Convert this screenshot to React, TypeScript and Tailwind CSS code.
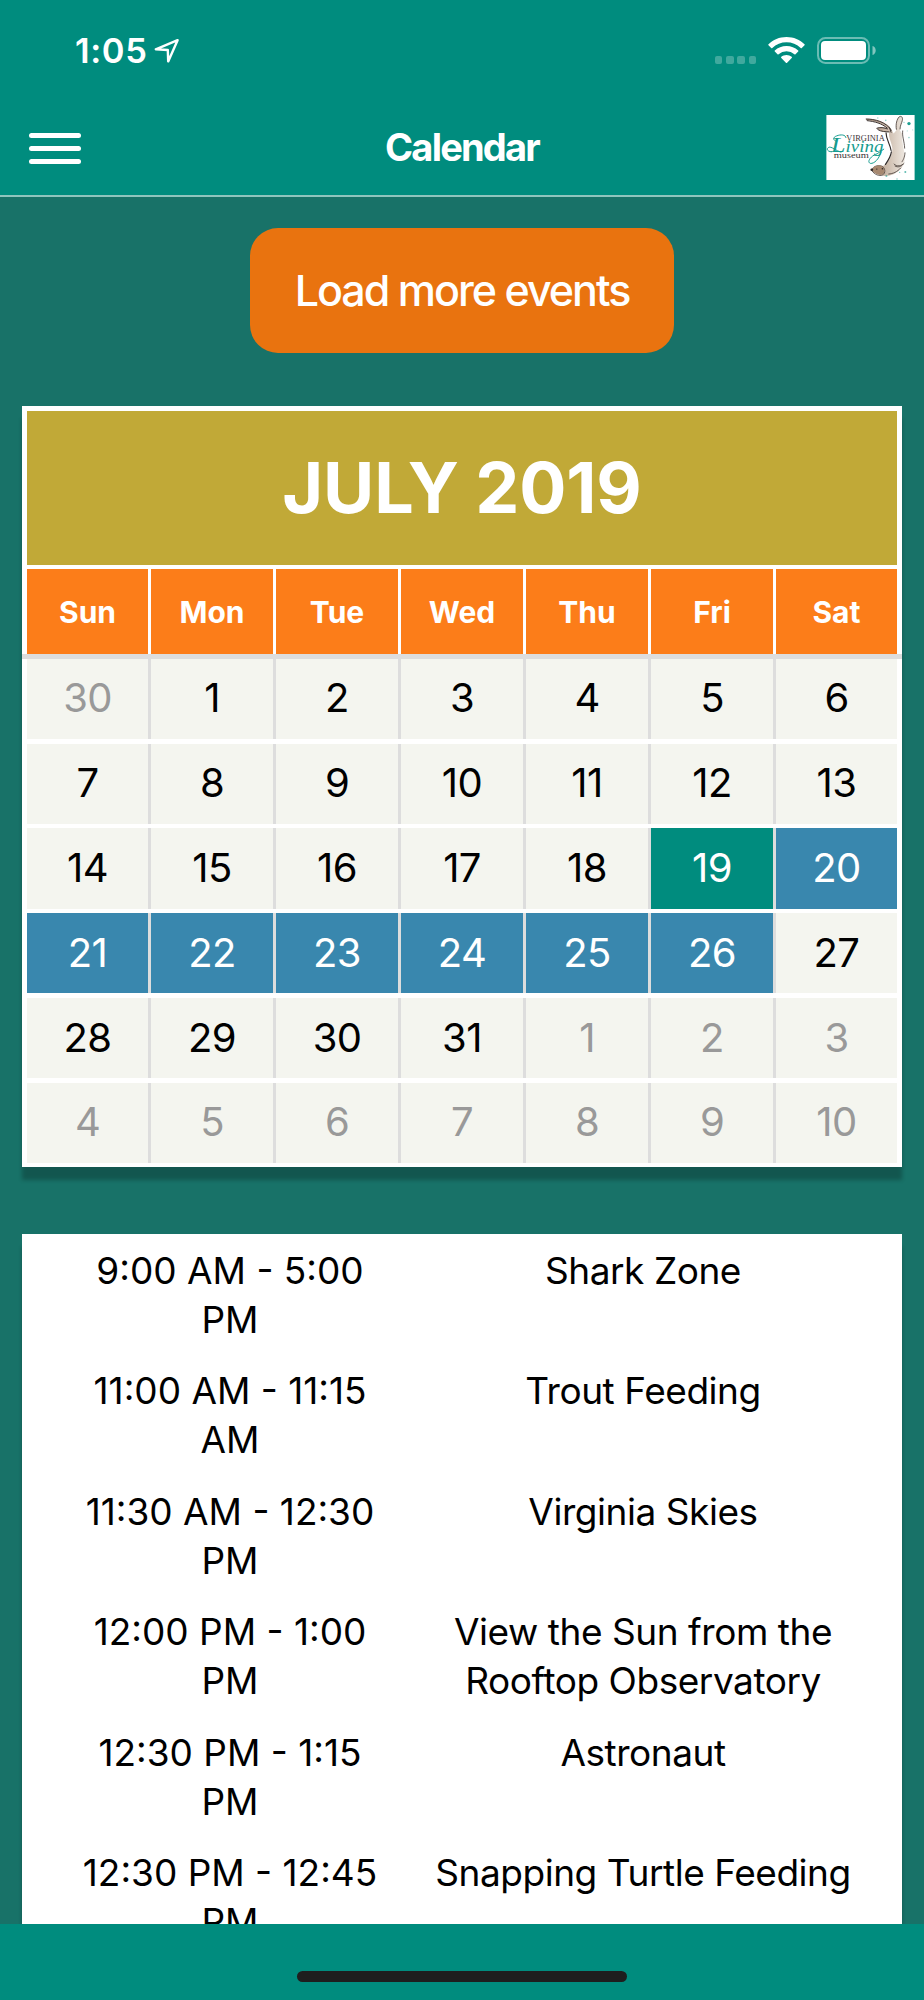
import React from 'react';
import clsx from 'clsx';

type DayState = 'default' | 'outside' | 'today' | 'event';

interface Day {
  label: number;
  state: DayState;
}

interface MuseumEvent {
  time: string;
  title: string;
}

const WEEKDAYS = ['Sun', 'Mon', 'Tue', 'Wed', 'Thu', 'Fri', 'Sat'];

const buildWeeks = (): Day[][] => {
  const days: Day[] = [{ label: 30, state: 'outside' }];
  for (let d = 1; d <= 31; d++) {
    days.push({ label: d, state: d === 19 ? 'today' : d >= 20 && d <= 26 ? 'event' : 'default' });
  }
  for (let d = 1; d <= 10; d++) {
    days.push({ label: d, state: 'outside' });
  }
  return Array.from({ length: 6 }, (_, i) => days.slice(i * 7, i * 7 + 7));
};

const EVENTS: MuseumEvent[] = [
  { time: '9:00 AM - 5:00 PM', title: 'Shark Zone' },
  { time: '11:00 AM - 11:15 AM', title: 'Trout Feeding' },
  { time: '11:30 AM - 12:30 PM', title: 'Virginia Skies' },
  { time: '12:00 PM - 1:00 PM', title: 'View the Sun from the Rooftop Observatory' },
  { time: '12:30 PM - 1:15 PM', title: 'Astronaut' },
  { time: '12:30 PM - 12:45 PM', title: 'Snapping Turtle Feeding' },
];

const StatusBar: React.FC = () => (
  <div className="flex h-[100px] items-start justify-between pt-[36px] pr-[47px] pl-[75px] text-white">
    <div className="flex items-start">
      <span className="text-[34.5px] leading-[29px] font-semibold tracking-[0.6px]">1:05</span>
      <svg className="mt-[2px] ml-[7px]" width="26" height="26" viewBox="0 0 26 26" fill="none">
        <path
          d="M23.6 2.2 1.8 11.3l12 .7.4 11.4Z"
          stroke="currentColor"
          strokeWidth="2.4"
          strokeLinejoin="round"
        />
      </svg>
    </div>
    <div className="flex items-start">
      <div className="mt-[20px] mr-[12px] flex gap-[3.7px]">
        {[0, 1, 2, 3].map((i) => (
          <span key={i} className="h-[7.5px] w-[7.5px] rounded-[2px] bg-white/25" />
        ))}
      </div>
      <svg className="mr-[12px]" width="37" height="28" viewBox="0 0 37 28" fill="currentColor">
        <path d="M18.5 1C11.4 1 5 3.8.5 8.2a.8.8 0 0 0 0 1.100l2.700 2.700c.3.3.8.3 1.100 0a20.500 20.500 0 0 1 28.400 0c.3.3.8.3 1.100 0l2.700-2.700a.8.8 0 0 0 0-1.100C32 3.800 25.600 1 18.500 1Z" />
        <path d="M18.500 10c-4.500 0-8.600 1.700-11.700 4.500a.8.8 0 0 0 0 1.100l2.700 2.700c.3.3.8.3 1.100 0a11.700 11.700 0 0 1 15.800 0c.3.3.8.3 1.100 0l2.700-2.700a.8.8 0 0 0 0-1.100A17.300 17.300 0 0 0 18.500 10Z" />
        <path d="M18.500 19c-2 0-3.800.7-5.200 1.800a.8.8 0 0 0 0 1.200l4.600 4.700c.3.3.9.3 1.200 0l4.600-4.700a.8.8 0 0 0 0-1.200A8.300 8.300 0 0 0 18.500 19Z" />
      </svg>
      <svg width="60" height="28" viewBox="0 0 60 28">
        <rect x="1" y="2" width="51" height="25" rx="7.5" fill="none" stroke="white" strokeOpacity=".42" strokeWidth="2" />
        <rect x="4" y="5" width="45" height="19" rx="4" fill="white" />
        <path d="M55.5 10c2 .5 3.2 2.300 3.200 4.400s-1.200 4-3.200 4.500Z" fill="white" fillOpacity=".5" />
      </svg>
    </div>
  </div>
);

const MuseumLogo: React.FC = () => (
  <svg width="89" height="65" viewBox="0 0 266 196" aria-label="Virginia Living Museum">
    <defs>
      <linearGradient id="fur" x1="0" x2="1">
        <stop offset="0" stopColor="#9d8572" />
        <stop offset=".55" stopColor="#cdbcad" />
        <stop offset="1" stopColor="#eee8e1" />
      </linearGradient>
    </defs>
    <rect width="266" height="196" fill="white" />
    <path
      d="M120 12c24 0 53 7 70 22l13 22 8-10c-3-12 0-30 7-39 5-6 13-1 12 8-2 10-8 20-8 32l7 10c-4 24 9 50 7 78-2 18-11 30-24 38-15 11-32 13-48 9-12-4-25-10-28-17 8-8 21-16 35-11 16-11 29-33 28-53-2-20-12-30-10-50-15 0-30-2-37-12 9-3 22-2 30 0-14-16-37-20-62-24Z"
      fill="url(#fur)"
    />
    <path
      d="M120 12c26 0 59 8 76 34M123 17c24 3 43 8 60 22M190 38l5 14M152 40c10-4 22-2 32 2M155 44c12 7 21 6 34 7"
      fill="none"
      stroke="#3d3532"
      strokeWidth="3"
      strokeLinecap="round"
    />
    <path
      d="M211 43c-3-15 2-31 8-37 7-5 12 1 10 10-2 9-7 16-7 26M230 48c-2 18 5 29 6 52M237 114c-1 15-6 22-9 27M204 148c8 9 23 6 30-2M207 154c9 5 18 2 23-4M224 160c-11 12-23 17-36 18M136 165c8-13 22-15 34-9 10 9 7 23-4 26-12 2-26-6-30-17Z"
      fill="none"
      stroke="#4b403b"
      strokeWidth="2.5"
      strokeLinecap="round"
    />
    <path d="M138 162c8-11 22-12 32-5 8 8 6 20-4 23-12 2-26-6-28-18Z" fill="#a68870" />
    <path
      d="M180 54c0 20 12 33 15 53M196 111c-2 15-9 25-18 38"
      fill="none"
      stroke="#2f2929"
      strokeWidth="3.5"
      strokeLinecap="round"
    />
    <circle cx="137" cy="165" r="4" fill="#2b2525" />
    <circle cx="152" cy="163" r="2" fill="#2b2525" />
    <circle cx="169" cy="162" r="2.5" fill="#2b2525" />
    <g fill="#1d9f91">
      <circle cx="249" cy="26" r="5" />
      <circle cx="234" cy="22" r="2" opacity=".5" />
      <circle cx="249" cy="68" r="2.5" opacity=".5" />
      <circle cx="181" cy="184" r="3" opacity=".6" />
      <circle cx="221" cy="173" r="2" opacity=".6" />
      <circle cx="238" cy="172" r="3" opacity=".7" />
      <circle cx="213" cy="193" r="2.5" opacity=".5" />
      <circle cx="155" cy="9" r="2" opacity=".5" />
      <circle cx="179" cy="16" r="2.5" opacity=".5" />
      <circle cx="244" cy="48" r="2" opacity=".3" />
      <circle cx="260" cy="45" r="2" opacity=".3" />
    </g>
    <text x="60" y="77" fontFamily="Liberation Serif, serif" fontSize="26" fill="#3b3536" textLength="116" lengthAdjust="spacingAndGlyphs">
      VIRGINIA
    </text>
    <text x="22" y="131" fontFamily="Liberation Serif, serif" fontSize="25" fill="#3b3536" textLength="106" lengthAdjust="spacingAndGlyphs">
      museum
    </text>
    <text x="14" y="112" fontFamily="Liberation Serif, serif" fontStyle="italic" fontSize="48" fill="#149b8e" textLength="158" lengthAdjust="spacingAndGlyphs">
      <tspan fontSize="66">L</tspan>iving
    </text>
    <path
      d="M31 79c-11-1-13-12 0-16 12-5 27-4 28 5M16 111c-12 0-17-8-10-13 9-5 22 10 38 14M164 113c-5 20-20 34-31 33-13-4 2-24 20-29l20-14"
      fill="none"
      stroke="#149b8e"
      strokeWidth="3"
      strokeLinecap="round"
    />
  </svg>
);

const NavBar: React.FC = () => (
  <div className="grid h-[95px] grid-cols-[1fr_auto_1fr] items-start">
    <button type="button" aria-label="Menu" className="mt-[33px] ml-[29px] flex w-[52px] flex-col gap-2">
      <span className="h-[5px] rounded-full bg-white" />
      <span className="h-[5px] rounded-full bg-white" />
      <span className="h-[5px] rounded-full bg-white" />
    </button>
    <h1 className="mt-[23px] text-[38px] leading-[48px] font-bold tracking-[-1.8px] text-white">Calendar</h1>
    <div className="mt-[15px] mr-[9px] justify-self-end">
      <MuseumLogo />
    </div>
  </div>
);

const DayCell: React.FC<{ day: Day }> = ({ day }) => (
  <div
    className={clsx(
      'flex items-center justify-center pb-px text-[40px] leading-none tracking-[-0.6px]',
      day.state === 'default' && 'bg-[#f4f5ef] text-black',
      day.state === 'outside' && 'bg-[#f4f5ef] text-[#999999]',
      day.state === 'today' && 'bg-[#008c7e] text-white',
      day.state === 'event' && 'bg-[#3987ae] text-white',
    )}
  >
    {day.label}
  </div>
);

const MonthCalendar: React.FC = () => (
  <section className="mx-[22px] mt-[53px] h-[761px] bg-white pt-[5px] shadow-[0_13px_4px_rgba(0,0,0,0.24)]">
    <h2 className="mx-[5px] flex h-[153.500px] items-center justify-center bg-[#c1a937] pt-px text-[70px] leading-none font-bold tracking-[-0.1px] text-white">
      JULY 2019
    </h2>
    <div className="mx-[5px] mt-[4.500px] grid h-[85px] grid-cols-[121px_repeat(5,122px)_121px] gap-x-[3px]">
      {WEEKDAYS.map((name) => (
        <div key={name} className="flex items-center justify-center bg-[#fc7d19] pt-px text-[30px] font-bold text-white">
          {name}
        </div>
      ))}
    </div>
    <div className="h-[4.750px] bg-[#dddddd]" />
    <div className="mx-[5px] flex flex-col gap-[4.500px]">
      {buildWeeks().map((week, i) => (
        <div key={i} className="grid h-[80.300px] grid-cols-[121px_repeat(5,122px)_121px] gap-x-[3px] bg-[#dddddd]">
          {week.map((day) => (
            <DayCell key={day.label} day={day} />
          ))}
        </div>
      ))}
    </div>
  </section>
);

const EventList: React.FC = () => (
  <section className="mx-[22px] mt-[67px] bg-white pt-[11.500px] shadow-[0_13px_4px_rgba(0,0,0,0.24)]">
    {EVENTS.map((event) => (
      <div
        key={`${event.time}-${event.title}`}
        className="grid h-[120.600px] grid-cols-[330px_430px] justify-start gap-x-[33px] pl-[43px] text-center text-[37px] leading-[49px] text-black"
      >
        <p>{event.time}</p>
        <p className="tracking-[-0.450px]">{event.title}</p>
      </div>
    ))}
  </section>
);

export default function App() {
  return (
    <div className="flex h-[2000px] w-[924px] flex-col overflow-hidden bg-[#187268] font-['Inter','Liberation_Sans',sans-serif]">
      <header className="h-[197px] shrink-0 border-b-2 border-[#8fc5be] bg-[#008c7e]">
        <StatusBar />
        <NavBar />
      </header>
      <main className="min-h-0 flex-1 overflow-hidden">
        <button
          type="button"
          className="mx-auto mt-[31px] flex h-[125px] w-[424px] items-center justify-center rounded-[28px] bg-[#e9730f] text-[43px] font-medium tracking-[-2px] text-white"
        >
          Load more events
        </button>
        <MonthCalendar />
        <EventList />
      </main>
      <footer className="flex h-[76px] shrink-0 justify-center bg-[#008c7e] pt-[47px]">
        <div className="h-[11px] w-[330px] rounded-full bg-[#1e1e1e]" />
      </footer>
    </div>
  );
}
